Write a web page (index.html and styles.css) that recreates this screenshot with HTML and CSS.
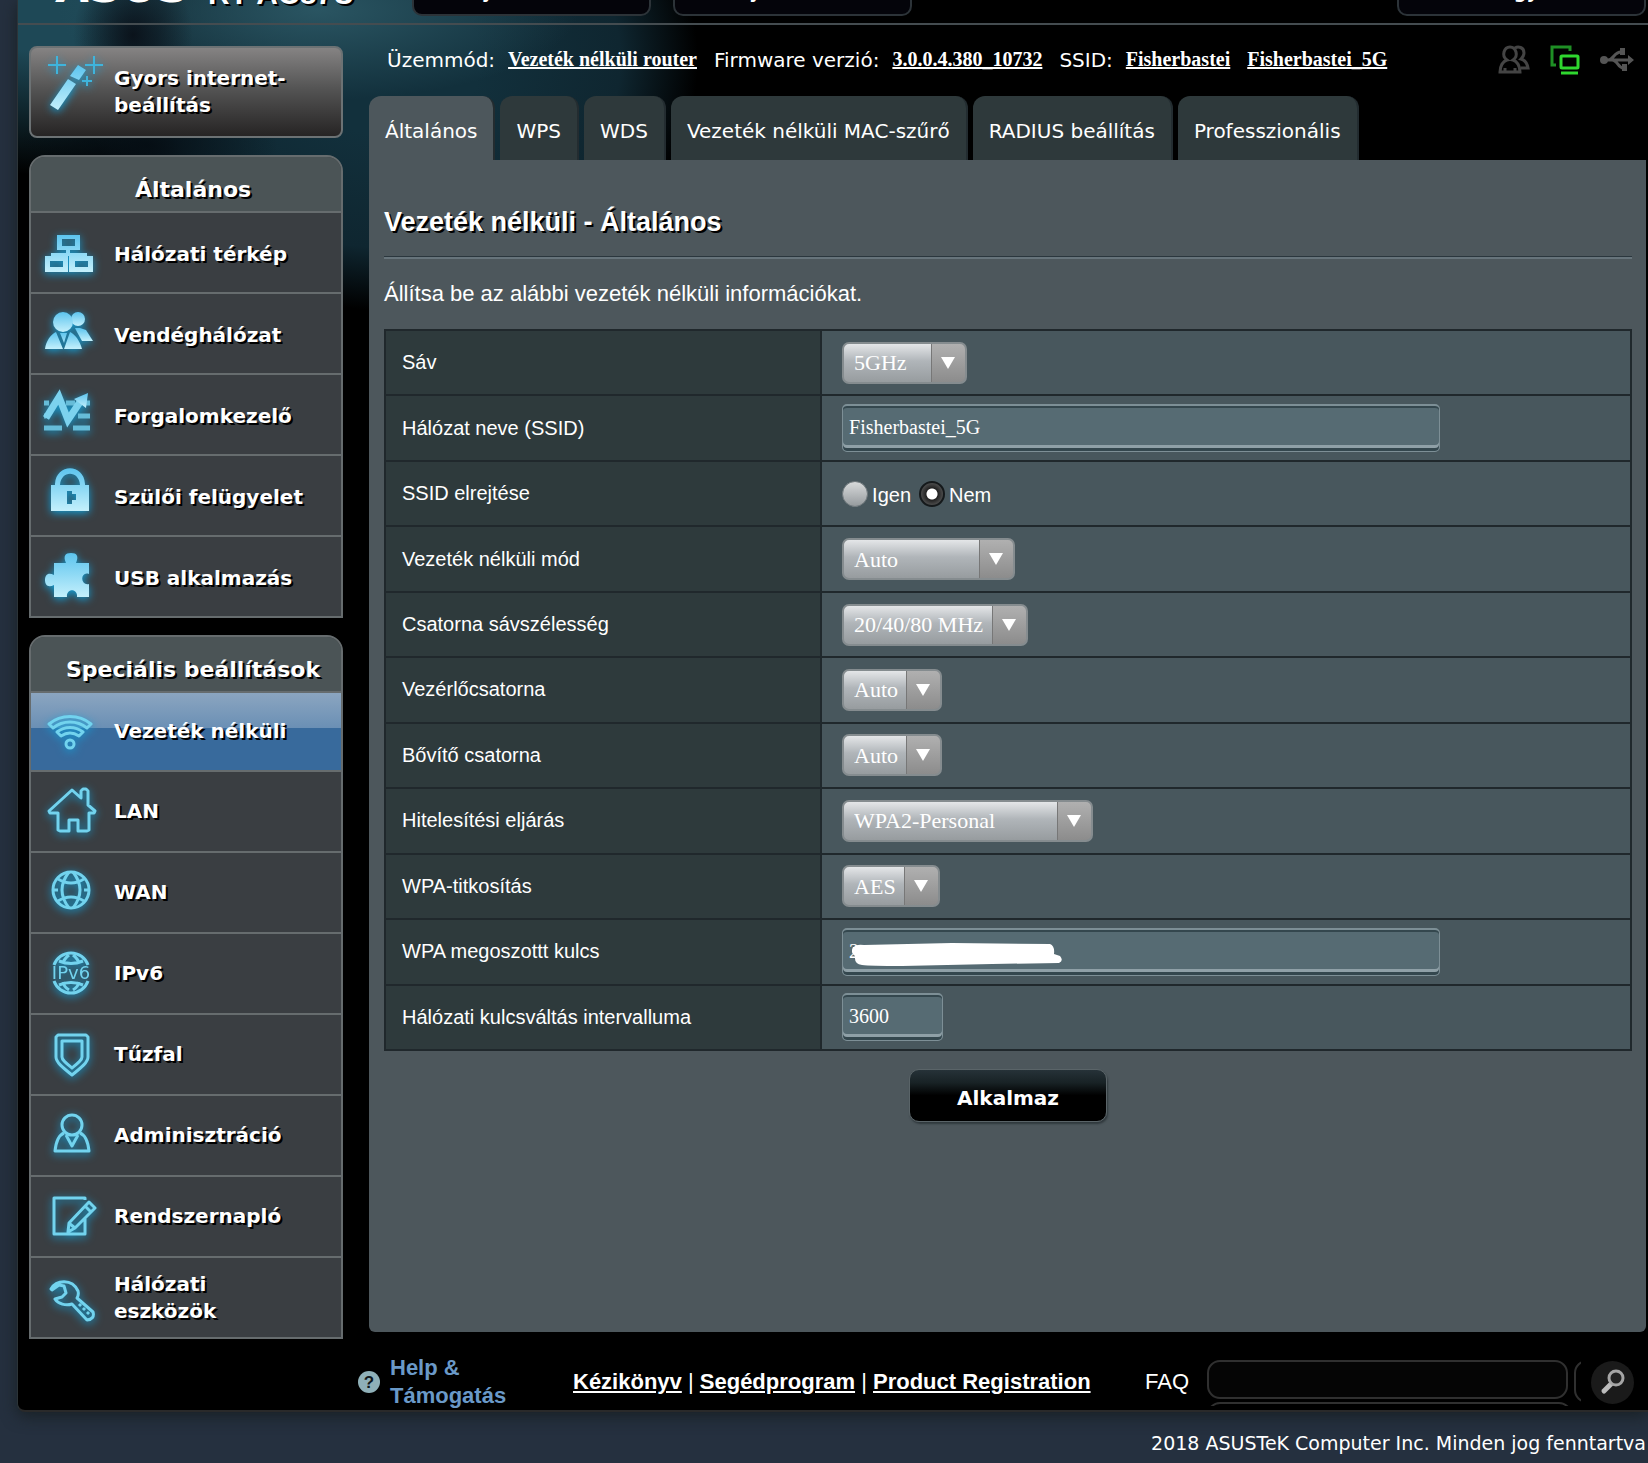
FILE: index.html
```html
<!DOCTYPE html>
<html lang="hu">
<head>
  <meta charset="UTF-8">
  <meta name="viewport" content="width=device-width, initial-scale=1">
  <title>ASUS Wireless Router RT-AC87U - Vezeték nélküli</title>
  <link rel="stylesheet" href="styles.css">
</head>
<body>
  <svg class="defs" aria-hidden="true">
    <linearGradient id="glow" x1="0" y1="0" x2="0" y2="1">
      <stop offset="0" stop-color="#5cc4ee"/>
      <stop offset="1" stop-color="#c4f0fc"/>
    </linearGradient>
  </svg>

  <div class="page">
    <header class="topbar">
      <span class="logo">ASUS</span>
      <span class="model">RT-AC87U</span>
      <button type="button" class="top-btn">Kijelentkezés</button>
      <button type="button" class="top-btn">Újraindítás</button>
      <button type="button" class="top-btn lang">Magyar</button>
    </header>

    <div class="layout">
      <nav class="sidebar">
        <a href="#" class="quick">
          <svg class="icon" viewBox="0 0 52 52"><path class="fill" d="M6 39l18-26 8 5-18 26zM26 10l8-11 8 5-7 10z"/><path class="thin" d="M13-10V8M4-1h18M50-10V8M41-1h18M43 10v10M38 15h10"/></svg>
          <span>Gyors internet-<br>beállítás</span>
        </a>

        <div class="menu general">
          <h2>Általános</h2>
          <a href="#">
            <svg class="icon" viewBox="0 0 52 52"><path class="fill" fill-rule="evenodd" d="M13 8h23v15H26v3h17v3h6v16H25V29h-1v16H1V29h6v-3h15v-3h-9zM18 12v7h13v-7zM6 34v6h13v-6zM31 34v6h13v-6z"/></svg>
            <span>Hálózati térkép</span>
          </a>
          <a href="#">
            <svg class="icon" viewBox="0 0 52 52"><circle class="fill" cx="34" cy="11" r="7"/><path class="fill" d="M31 20h5l6 2 7 11H38l-5-9z"/><circle class="fill" cx="19" cy="14" r="10"/><path class="fill" d="M1 41c1-8 6-15 11-17l7 17zM20 41l6-17c5 2 10 9 12 17zM16 25h7l-3 10z"/></svg>
            <span>Vendéghálózat</span>
          </a>
          <a href="#">
            <svg class="icon" viewBox="0 0 52 52"><path class="bar" d="M0 14h5M22 14h9M41 14h5M0 27h2M34 27h12M0 39h18M29 39h17"/><path class="zig" d="M2 29L15 8l9 23 12-18"/><path class="fill" d="M30 10l14-6-2 15z"/></svg>
            <span>Forgalomkezelő</span>
          </a>
          <a href="#">
            <svg class="icon" viewBox="0 0 52 52"><path class="fill" fill-rule="evenodd" d="M7 15h4v-1C12-7 40-7 41 14v1h4v26H7zM16 15h20C35 0 17 0 16 15zM23 21v13h5v-4h4v-6h-4v-3z"/></svg>
            <span>Szülői felügyelet</span>
          </a>
          <a href="#">
            <svg class="icon" viewBox="0 0 52 52"><path class="fill" d="M10 12h12c-3-7-1-10 5-10s8 3 5 10h13v11c-9-3-9 12 0 10v13H33c1-9-11-9-10 0H10V34c-6 3-9 0-9-5s3-8 9-5z"/></svg>
            <span>USB alkalmazás</span>
          </a>
        </div>

        <div class="menu">
          <h2>Speciális beállítások</h2>
          <a href="#" class="active">
            <svg class="icon" viewBox="0 0 52 52"><circle class="line" cx="26" cy="38" r="4"/><path class="line" d="M5 18c12-10 30-10 42 0l-4 4c-10-8-24-8-34 0zM13 26c8-6 18-6 26 0l-4 4c-6-4-12-4-18 0z"/></svg>
            <span>Vezeték nélküli</span>
          </a>
          <a href="#">
            <svg class="icon" viewBox="0 0 52 52"><path class="line" d="M28 4l9 8V5l2-2h3l2 2v14l7 6-1 2h-5v17l-2 1h-9V34h-9v11h-9l-2-1V27H6l-1-2z"/></svg>
            <span>LAN</span>
          </a>
          <a href="#">
            <svg class="icon" viewBox="0 0 52 52"><g class="line"><circle cx="27" cy="23" r="18"/><path d="M14 12q13 8 26 0M14 34q13-8 26 0M9 23h5M40 23h5M25 5q-14 18 0 36M29 5q14 18 0 36"/></g></svg>
            <span>WAN</span>
          </a>
          <a href="#">
            <svg class="icon" viewBox="0 0 52 52"><g class="line"><path d="M10 17a18 18 0 0 1 34 0M10 33a18 18 0 0 0 34 0M15 13q12 5 24 0M15 37q12-5 24 0M25 7q-5 4-6 8M29 7q5 4 6 8M19 34q1 5 6 8M35 34q-1 5-6 8"/></g><text class="ip" x="27" y="31" text-anchor="middle">IPv6</text></svg>
            <span>IPv6</span>
          </a>
          <a href="#">
            <svg class="icon" viewBox="0 0 52 52"><path class="line" d="M14 6h28l2 2v20c0 5-6 10-16 18-10-8-16-13-16-18V8zM18 12h20v16c0 3-4 6-10 11-6-5-10-8-10-11z"/></svg>
            <span>Tűzfal</span>
          </a>
          <a href="#">
            <svg class="icon" viewBox="0 0 52 52"><circle class="line" cx="28" cy="15" r="10"/><path class="line" d="M20 23c-5 2-8 9-9 18h34c-1-9-4-16-9-18M22 25l6 11 6-11"/></svg>
            <span>Adminisztráció</span>
          </a>
          <a href="#">
            <svg class="icon" viewBox="0 0 52 52"><path class="line" d="M41 9V7H10v36h31V27M24 41l1-9 20-21 6 6-20 20zM41 15l6 6M26 33l5 4"/></svg>
            <span>Rendszernapló</span>
          </a>
          <a href="#">
            <svg class="icon" viewBox="0 0 52 52"><path class="line" d="M7 17C12 8 28 6 34 19q1 4-1 7l16 14q2 7-6 8L28 32c-6 2-14 0-17-5l7-2 4-4-2-7-5-1-7 5zM35 34l2-2M39 38l2-2M43 42l2-2"/></svg>
            <span>Hálózati eszközök</span>
          </a>
        </div>
      </nav>

      <main class="main">
        <div class="status">
          <span class="label">Üzemmód:</span>
          <a href="#">Vezeték nélküli router</a>
          <span class="label next">Firmware verzió:</span>
          <a href="#">3.0.0.4.380_10732</a>
          <span class="label next">SSID:</span>
          <a href="#">Fisherbastei</a>
          <a href="#" class="next">Fisherbastei_5G</a>
          <div class="status-icons">
            <svg width="32" height="30" viewBox="0 0 32 30"><g fill="none" stroke="#444" stroke-width="3"><path d="M2 27c0-6 3-11 7-12-6-4-3-13 3-13s9 9 3 13c4 1 7 6 7 12z"/><path d="M17 3c3-2 9-1 9 5 0 3-1 4-3 6 4 1 6 4 7 9h-7M7 27v-4M17 27v-4"/></g></svg>
            <svg width="30" height="30" viewBox="0 0 30 30"><g fill="none" stroke="#2fd62f" stroke-width="3"><path d="M6 20H2V2h18v4" stroke="#1f8f25"/><rect x="11" y="11" width="17" height="12" rx="1"/><path d="M11 28h17"/></g></svg>
            <svg width="34" height="30" viewBox="0 0 34 30"><path d="M3 15h27M8 15c6 0 6-9 14-8M12 15c6 0 6 9 12 8" fill="none" stroke="#555" stroke-width="3"/><circle cx="4" cy="15" r="4" fill="#555"/><path d="M28 10l6 5-6 5zM20 3h5v7h-5zM22 19h5v7h-5z" fill="#555"/></svg>
          </div>
        </div>

        <div class="tabs">
          <a href="#" class="active">Általános</a>
          <a href="#">WPS</a>
          <a href="#">WDS</a>
          <a href="#">Vezeték nélküli MAC-szűrő</a>
          <a href="#">RADIUS beállítás</a>
          <a href="#">Professzionális</a>
        </div>

        <form class="panel">
          <h1>Vezeték nélküli - Általános</h1>
          <p>Állítsa be az alábbi vezeték nélküli információkat.</p>
          <table>
            <tr>
              <th><label for="band">Sáv</label></th>
              <td><span class="select w-band"><select id="band"><option>5GHz</option><option>2.4GHz</option></select></span></td>
            </tr>
            <tr>
              <th><label for="ssid">Hálózat neve (SSID)</label></th>
              <td><input type="text" id="ssid" value="Fisherbastei_5G"></td>
            </tr>
            <tr>
              <th>SSID elrejtése</th>
              <td>
                <div class="radios">
                  <input type="radio" name="hide" id="hide-yes"><label for="hide-yes">Igen</label>
                  <input type="radio" name="hide" id="hide-no" checked><label for="hide-no">Nem</label>
                </div>
              </td>
            </tr>
            <tr>
              <th><label for="mode">Vezeték nélküli mód</label></th>
              <td><span class="select w-mode"><select id="mode"><option>Auto</option></select></span></td>
            </tr>
            <tr>
              <th><label for="width">Csatorna sávszélesség</label></th>
              <td><span class="select w-width"><select id="width"><option>20/40/80 MHz</option></select></span></td>
            </tr>
            <tr>
              <th><label for="channel">Vezérlőcsatorna</label></th>
              <td><span class="select"><select id="channel"><option>Auto</option></select></span></td>
            </tr>
            <tr>
              <th><label for="ext">Bővítő csatorna</label></th>
              <td><span class="select"><select id="ext"><option>Auto</option></select></span></td>
            </tr>
            <tr>
              <th><label for="auth">Hitelesítési eljárás</label></th>
              <td><span class="select w-auth"><select id="auth"><option>WPA2-Personal</option></select></span></td>
            </tr>
            <tr>
              <th><label for="crypto">WPA-titkosítás</label></th>
              <td><span class="select"><select id="crypto"><option>AES</option></select></span></td>
            </tr>
            <tr>
              <th><label for="key">WPA megoszottt kulcs</label></th>
              <td>
                <div class="key">
                  <input type="text" id="key" value="2">
                  <svg class="scribble" width="210" height="24" viewBox="0 0 210 24"><path fill="#fff" d="M2 4q2-3 10-2L100 0l98 1q5 2 4 10l6 2q4 5-1 7l-67 1-90 2q-32 0-40-1-8-1-7-9-5-3-2-9z"/></svg>
                </div>
              </td>
            </tr>
            <tr>
              <th><label for="rekey">Hálózati kulcsváltás intervalluma</label></th>
              <td><input type="text" id="rekey" class="short" value="3600"></td>
            </tr>
          </table>
          <button type="button" class="apply">Alkalmaz</button>
        </form>

        <div class="links">
          <svg width="24" height="24" viewBox="0 0 24 24"><circle cx="12" cy="12" r="11" fill="#8fb0b8"/><text x="12" y="18" text-anchor="middle">?</text></svg>
          <a href="#" class="help">Help &amp; Támogatás</a>
          <div class="docs"><a href="#">Kézikönyv</a> | <a href="#">Segédprogram</a> | <a href="#">Product Registration</a></div>
          <label for="faq">FAQ</label>
          <div class="faq-box"><input type="text" id="faq"></div>
          <button type="button" class="search" aria-label="Keresés">
            <svg width="26" height="26" viewBox="0 0 26 26"><path d="M4 22l8-8" stroke="#bbb" stroke-width="5" stroke-linecap="round"/><circle cx="16" cy="9" r="7" fill="#222" stroke="#a5a5a5" stroke-width="3"/></svg>
          </button>
        </div>
      </main>
    </div>
  </div>

  <footer>2018 ASUSTeK Computer Inc. Minden jog fenntartva</footer>
</body>
</html>
```

FILE: styles.css
```css
* {
  box-sizing: border-box;
}

body {
  margin: 0;
  background-color: #25303f;
  color: #fff;
  font-family: "Liberation Sans", Arial, sans-serif;
  font-size: 20px;
  overflow-x: hidden;
}

a {
  color: #fff;
}

.defs {
  position: absolute;
  width: 0;
  height: 0;
}

.page {
  margin-left: 17px;
  border-left: 1px solid #2c3438;
  border-bottom: 2px solid #2a2a2a;
  border-bottom-left-radius: 8px;
  background-color: #000;
  background-image:
    radial-gradient(ellipse 60px 70px at 115px 35px, rgba(8, 12, 20, 0.85), transparent),
    radial-gradient(ellipse 130px 60px at 130px 145px, rgba(4, 10, 16, 0.8), transparent),
    radial-gradient(ellipse 260px 90px at 300px 10px, #2a5562, transparent),
    radial-gradient(ellipse 310px 250px at 370px 60px, #12303c 30%, #0f2630 75%, transparent),
    radial-gradient(ellipse 360px 175px at 40px 0, #1e4856 30%, transparent);
  background-repeat: no-repeat;
  box-shadow: 0 4px 16px #182024;
}

/* top bar */

.topbar {
  display: flex;
  align-items: flex-end;
  height: 25px;
  overflow: hidden;
  padding: 0 2px 7px 40px;
  border-bottom: 2px solid #444c50;
}

.logo,
.model {
  font-weight: bold;
  white-space: nowrap;
}

.logo {
  width: 150px;
  font-family: "DejaVu Sans", sans-serif;
  font-style: italic;
  font-size: 44px;
  line-height: 58px;
}

.model {
  width: 204px;
  font-size: 30px;
  line-height: 44px;
  text-shadow: 2px 2px #000;
}

.top-btn {
  width: 239px;
  height: 48px;
  margin-right: 22px;
  border: 2px solid #2c3338;
  border-radius: 10px;
  background: #04040a;
  color: #fff;
  font: bold 18px/20px "DejaVu Sans", sans-serif;
  padding: 0;
  flex-shrink: 0;
}

.top-btn.lang {
  width: 249px;
  margin: 0 0 0 auto;
}

.layout {
  display: flex;
  gap: 26px;
  padding-left: 11px;
}

/* left menu */

.sidebar {
  width: 314px;
  flex-shrink: 0;
  padding-top: 21px;
  font-family: "DejaVu Sans", Verdana, sans-serif;
  font-weight: bold;
  font-size: 20px;
  line-height: 27px;
  text-shadow: 2px 2px #000;
}

.sidebar a {
  display: flex;
  align-items: center;
  gap: 18px;
  padding: 0 20px 0 13px;
  text-decoration: none;
}

.sidebar .quick {
  height: 92px;
  border: 2px solid #6c7274;
  border-radius: 8px;
  background: linear-gradient(#858383, #555 45%, #262424);
}

.icon {
  width: 52px;
  height: 52px;
  flex-shrink: 0;
  overflow: visible;
  filter: drop-shadow(0 2px 4px #12a0d8);
}

.fill {
  fill: url(#glow);
}

.line {
  fill: none;
  stroke: #72d3ee;
  stroke-width: 3;
  stroke-linejoin: round;
}

.thin {
  fill: none;
  stroke: #3fb4dc;
  stroke-width: 2;
}

.bar {
  stroke: #66bcd8;
  stroke-width: 5;
}

.zig {
  fill: none;
  stroke: #7cd2ee;
  stroke-width: 7;
}

.ip {
  font: 18px "DejaVu Sans", sans-serif;
  fill: #72d3ee;
  text-shadow: none;
}

.menu {
  margin-top: 17px;
  border: 2px solid #666c6e;
  border-radius: 16px 16px 0 0;
  background: #3a3e42;
}

.menu h2 {
  height: 54px;
  margin: 0;
  padding: 19px 0 0 14px;
  background: #4b5456;
  border-radius: 14px 14px 0 0;
  font-size: 22px;
  line-height: 28px;
  text-align: center;
  white-space: nowrap;
}

.menu a {
  height: 81px;
  border-top: 2px solid #666c6e;
}

.menu .active {
  height: 79px;
  background: linear-gradient(#8ba5c0, #6b90b5 45%, #386a9c 45%, #386a9c);
}

.menu span {
  max-width: 200px;
}

.general span {
  margin-top: 4px;
}

/* right side */

.main {
  flex: 1;
  min-width: 0;
  padding-right: 2px;
}

.status {
  display: flex;
  align-items: center;
  height: 71px;
  padding: 0 12px 2px 18px;
  white-space: nowrap;
}

.status a {
  margin-left: 13px;
  font: bold 20px "Liberation Serif", "Times New Roman", serif;
}

.label {
  font-family: "DejaVu Sans", Verdana, sans-serif;
  font-size: 20px;
}

.status .next {
  margin-left: 17px;
}

.status-icons {
  display: flex;
  gap: 20px;
  margin-left: auto;
}

.tabs {
  display: flex;
  gap: 5px;
  height: 64px;
}

.tabs a {
  padding: 0 16px;
  border-radius: 12px 12px 0 0;
  border-right: 2px solid #232c30;
  background: #2e393b;
  font: 20px/70px "DejaVu Sans", Verdana, sans-serif;
  text-decoration: none;
  white-space: nowrap;
}

.tabs .active {
  background: #4d575c;
}

.panel {
  min-height: 1172px;
  padding: 46px 14px 0 15px;
  border-radius: 0 0 6px 6px;
  background: #4d575c;
}

.panel h1 {
  margin: 0;
  padding-bottom: 19px;
  border-bottom: 2px solid #67747b;
  box-shadow: inset 0 -1px #2b373e;
  font-size: 27px;
  line-height: 32px;
  text-shadow: 2px 2px #000;
}

.panel p {
  margin: 0;
  padding: 22px 0;
  font-size: 22px;
  line-height: 26px;
}

table {
  width: 100%;
  height: 722px;
  border-collapse: collapse;
  table-layout: fixed;
}

tr {
  height: 65px;
}

th,
td {
  padding: 0 0 0 20px;
  border: 2px solid #20282c;
}

th {
  width: 35%;
  padding-left: 16px;
  background: #2e3a3c;
  font-weight: normal;
  text-align: left;
}

td {
  background: #48575d;
}

.select {
  position: relative;
  display: block;
  width: fit-content;
}

.select::after {
  content: "";
  position: absolute;
  right: 12px;
  top: 15px;
  border: 7px solid transparent;
  border-top: 12px solid #fff;
  border-bottom: 0;
  pointer-events: none;
}

select {
  display: block;
  appearance: none;
  width: 100%;
  height: 42px;
  padding: 0 42px 0 10px;
  border: 2px solid #858c8f;
  border-radius: 7px;
  background:
    linear-gradient(90deg, #777 1px, transparent 1px) right / 34px 100% no-repeat,
    linear-gradient(#b0b0b0, #8c8c8c) right / 34px 100% no-repeat,
    linear-gradient(#e4e6e8, #b0b5b9 45%, #979c9f);
  color: #fff;
  font: 22px "Liberation Serif", "Times New Roman", serif;
}

.w-band {
  width: 125px;
}

.w-mode {
  width: 173px;
}

.w-width {
  width: 186px;
}

.w-auth {
  width: 251px;
}

input[type="text"] {
  display: block;
  width: 598px;
  height: 48px;
  padding: 0 6px 2px;
  border: 1px solid #7d8f96;
  border-top-width: 2px;
  border-radius: 5px;
  background: #566b73;
  box-shadow: inset 0 2px #34474e, inset 0 -3px #34474e, inset 0 -6px #8fa0a7;
  color: #fff;
  font: 20px "Liberation Serif", "Times New Roman", serif;
}

input.short {
  width: 101px;
}

.key {
  position: relative;
}

.scribble {
  position: absolute;
  left: 10px;
  top: 15px;
}

.radios {
  display: flex;
  align-items: center;
}

.radios label {
  margin: 4px 8px 0 4px;
}

input[type="radio"] {
  appearance: none;
  width: 26px;
  height: 26px;
  margin: 0;
  border: 1px solid #6f787c;
  border-radius: 50%;
  background: linear-gradient(#d8dadb, #969b9e);
}

input[type="radio"]:checked {
  border: 2px solid #15191b;
  background: radial-gradient(circle, #fff 5px, #222 6px, #555 12px);
}

.apply {
  display: block;
  width: 198px;
  height: 53px;
  margin: 18px auto 0;
  border: 1px solid #5a6468;
  border-radius: 10px;
  background: linear-gradient(#263238, #182225 25%, #000 50%);
  box-shadow: 1px 2px 2px #30393d;
  color: #fff;
  font: bold 20px "DejaVu Sans", Verdana, sans-serif;
  padding-top: 6px;
}

/* bottom links */

.links {
  display: flex;
  align-items: center;
  height: 78px;
  margin-left: -12px;
  padding: 22px 12px 0 0;
  font-size: 22px;
  line-height: 28px;
  white-space: nowrap;
}

.links text {
  font: bold 17px "Liberation Sans", sans-serif;
  fill: #10181c;
}

.links .help {
  width: 115px;
  margin: 0 68px 0 9px;
  color: #6a99c8;
  font-weight: bold;
  text-decoration: none;
  white-space: normal;
}

.docs a {
  font-weight: bold;
}

.links label {
  margin: 0 18px 0 auto;
}

/* the field's frame repeats once to the right and once below */
.faq-box {
  position: relative;
  width: 374px;
  height: 48px;
  overflow: hidden;
}

.faq-box::before,
.faq-box::after {
  content: "";
  position: absolute;
  width: 361px;
  height: 39px;
  border: 2px solid #303030;
  border-radius: 13px;
}

.faq-box::before {
  left: 367px;
  top: 2px;
}

.faq-box::after {
  left: 0;
  top: 44px;
}

.links input[type="text"] {
  width: 361px;
  height: 39px;
  margin-top: 2px;
  border: 2px solid #303030;
  border-radius: 13px;
  background: #050505;
  box-shadow: none;
}

.search {
  display: flex;
  align-items: center;
  justify-content: center;
  width: 43px;
  height: 43px;
  margin-left: 10px;
  padding: 0;
  border: 0;
  border-radius: 50%;
  background: #1a1a1a;
}

footer {
  padding: 18px 2px 7px;
  font: 19px/26px "DejaVu Sans", Verdana, sans-serif;
  text-align: right;
  white-space: nowrap;
}
```
